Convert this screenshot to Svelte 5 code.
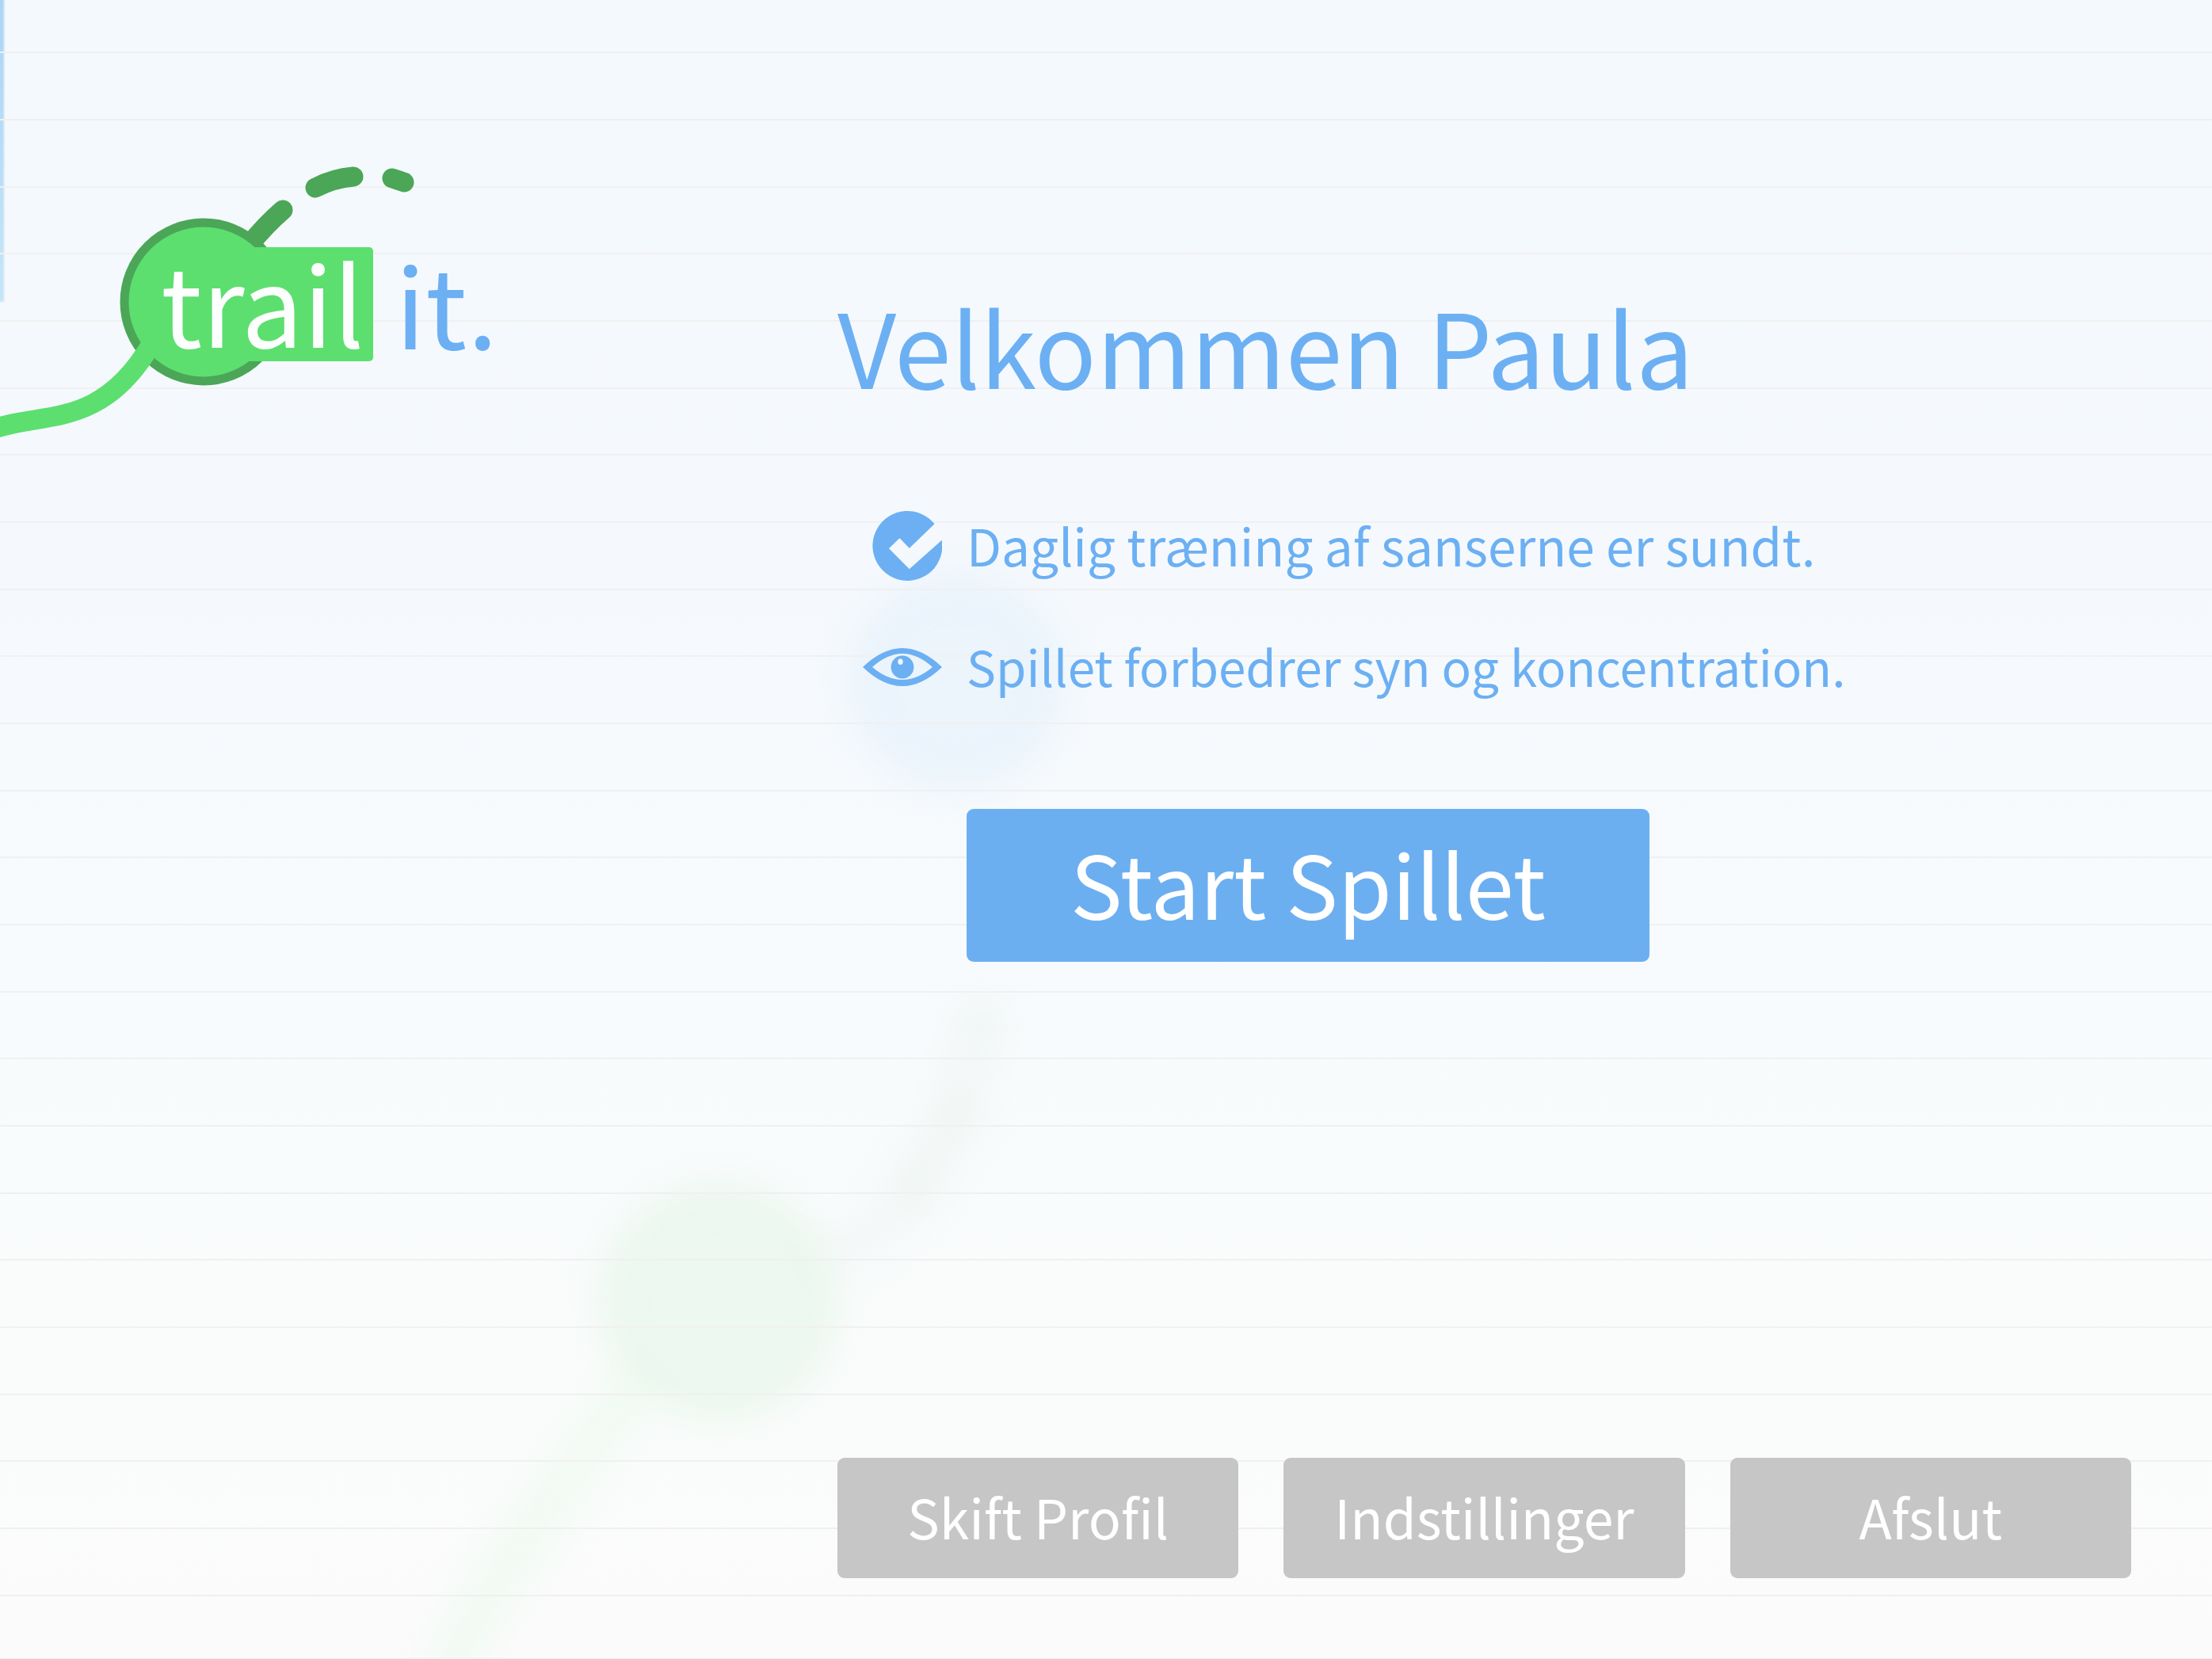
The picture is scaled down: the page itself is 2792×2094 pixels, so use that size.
<script>
  const actions = ['Skift Profil', 'Indstillinger', 'Afslut'];
</script>

<div class="page">
  <svg class="backdrop" viewBox="0 0 2792 2094" preserveAspectRatio="xMinYMin slice" aria-hidden="true">
    <defs>
      <filter id="haze" x="-50%" y="-50%" width="200%" height="200%" color-interpolation-filters="sRGB">
        <feGaussianBlur stdDeviation="23" />
      </filter>
      <filter id="edge" x="-100%" y="-5%" width="300%" height="110%">
        <feGaussianBlur stdDeviation="1" />
      </filter>
      <linearGradient id="strip" x1="0" y1="0" x2="0" y2="1">
        <stop offset="0" stop-color="#acd4f4" />
        <stop offset="1" stop-color="#c6e5f8" />
      </linearGradient>
    </defs>
    <rect x="-6" y="-6" width="11" height="387" fill="url(#strip)" filter="url(#edge)" />
    <g filter="url(#haze)" fill="none" stroke-linecap="round">
      <path d="M545 2150C625 1980 725 1850 800 1750" stroke="#f0faf2" stroke-width="54" />
      <path d="M1030 1590C1180 1540 1205 1400 1238 1286" stroke="#f3f7f7" stroke-width="50" />
      <path d="M1150 1508L1166 1474M1203 1420L1212 1385M1232 1308L1238 1288" stroke="#eff5f3" stroke-width="56" />
      <circle cx="907" cy="1643" r="130" fill="#edf8f1" stroke="#e7f6ea" stroke-width="30" />
      <circle cx="1207" cy="860" r="118" fill="#ecf4fc" stroke="#e7f2fb" stroke-width="30" />
    </g>
  </svg>
  <div class="rules"></div>

  <header>
    <svg class="logo" viewBox="0 0 640 570" role="img" aria-label="trail it.">
      <g fill="none" stroke="#4ba657" stroke-width="25" stroke-linecap="round">
        <path d="M314 310Q335 284 357 265" />
        <path d="M398 237Q421 225 446 223" />
        <path d="M495 225L510 230" />
      </g>
      <circle cx="257" cy="381" r="100" fill="#5cdf6f" stroke="#4ba657" stroke-width="11" />
      <rect x="260" y="312" width="211" height="144" rx="5" fill="#5cdf6f" />
      <path d="M-12 543C50 518 125 545 190 436" fill="none" stroke="#5cdf6f" stroke-width="25" />
      <text x="203" y="439" fill="#fdfefe">trail</text>
      <text x="499" y="441" fill="#6cb0f3">it.</text>
    </svg>
  </header>

  <main>
    <h1>Velkommen Paula</h1>
    <ul>
      <li>
        <span class="icon">
          <svg width="88" height="88" viewBox="0 0 88 88" aria-hidden="true">
            <path d="M78.6 16.3A44 44 0 1 0 87.8 36.7L46.8 73.3L21 47.3L34.5 34.3L46.8 47Z" fill="currentColor" />
          </svg>
        </span>
        <span>Daglig træning af sanserne er sundt.</span>
      </li>
      <li class="detail">
        <span class="icon">
          <svg width="100" height="48" viewBox="0 0 100 48" aria-hidden="true">
            <path
              fill="currentColor"
              fill-rule="evenodd"
              d="M0 24Q25 0 50 0Q75 0 100 24Q75 48 50 48Q25 48 0 24ZM12 24Q31 7 50 7Q69 7 88 24Q69 40 50 40Q31 40 12 24Z"
            />
            <circle cx="50" cy="24" r="14.4" fill="currentColor" />
            <ellipse cx="47.5" cy="17.2" rx="3.2" ry="3.8" fill="#f1f6fd" />
          </svg>
        </span>
        <span>Spillet forbedrer syn og koncentration.</span>
      </li>
    </ul>
    <button class="start" type="button">Start Spillet</button>
    <footer>
      {#each actions as action}
        <button type="button">{action}</button>
      {/each}
    </footer>
  </main>
</div>

<style>
  :global(body) {
    margin: 0;
  }

  .page {
    position: relative;
    box-sizing: border-box;
    min-height: 100vh;
    display: grid;
    grid-template-columns: 1057px minmax(0, 1fr);
    overflow: hidden;
    border-bottom: 1px solid #f0f0f0;
    background: linear-gradient(#f4f9fd, #f5f9fd 35%, #f8fbfd 60%, #fafcfb 85%, #fbfbfb);
    color: #6cb0f3;
    font-family: 'Noto Sans CJK SC', 'Noto Sans', sans-serif;
  }

  .backdrop,
  .rules {
    position: absolute;
    inset: 0;
    width: 100%;
    height: 100%;
  }

  .rules {
    background: repeating-linear-gradient(
      transparent 0 65px,
      #f0f0f0 65px 67px,
      transparent 67px 150px,
      #f0f0f0 150px 152px,
      transparent 152px 235px,
      #f0f0f0 235px 237px,
      transparent 237px 254px
    );
  }

  header,
  main {
    position: relative;
  }

  .logo {
    display: block;
    width: 640px;
    height: 570px;
  }

  .logo text {
    font-size: 138px;
  }

  main {
    display: flex;
    flex-direction: column;
    padding: 355px 102px 101px 0;
  }

  h1 {
    margin: 0;
    font-size: 129px;
    line-height: 160px;
    font-weight: 400;
  }

  ul {
    display: flex;
    flex-direction: column;
    gap: 57px;
    margin: 124px 0 133px;
    padding: 0;
    list-style: none;
  }

  li {
    display: flex;
    align-items: center;
    gap: 31px;
    font-size: 64px;
    line-height: 96px;
  }

  .detail {
    font-size: 62px;
  }

  .icon {
    display: flex;
    justify-content: flex-end;
    width: 132px;
    padding-top: 4px;
  }

  button {
    border: 0;
    border-radius: 9px;
    color: #fff;
    font-family: inherit;
    text-align: center;
  }

  .start {
    width: 862px;
    margin-left: 163px;
    padding: 12px 16px 21px;
    background: #6caff1;
    font-size: 110px;
    line-height: 160px;
  }

  footer {
    display: flex;
    gap: 57px;
    margin-top: auto;
  }

  footer button {
    flex: 1;
    padding: 26px 16px 30px;
    background: #c6c6c6;
    font-size: 68px;
    line-height: 96px;
  }
</style>
